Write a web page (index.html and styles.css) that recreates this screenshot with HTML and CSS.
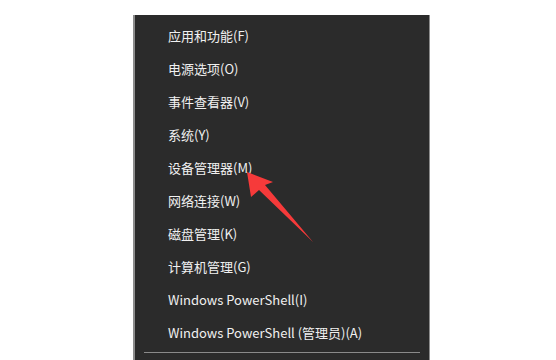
FILE: index.html
```html
<!DOCTYPE html>
<html lang="zh-CN">
<head>
<meta charset="utf-8">
<link rel="stylesheet" href="styles.css">
</head>
<body>
<div class="page">
  <div class="menu">
    <div class="item">应用和功能(F)</div>
    <div class="item">电源选项(O)</div>
    <div class="item">事件查看器(V)</div>
    <div class="item">系统(Y)</div>
    <div class="item">设备管理器(M)</div>
    <div class="item">网络连接(W)</div>
    <div class="item">磁盘管理(K)</div>
    <div class="item">计算机管理(G)</div>
    <div class="item">Windows PowerShell(I)</div>
    <div class="item">Windows PowerShell (管理员)(A)</div>
    <div class="sep"></div>
  </div>
  <svg class="arrow" width="556" height="360" viewBox="0 0 556 360">
    <polygon points="247,172 251,197 259,190 313,242 265,185 273,182" fill="#f63a3a"/>
  </svg>
</div>
</body>
</html>
```
FILE: styles.css
```css
html, body {
  margin: 0;
  padding: 0;
  background: #ffffff;
  overflow: hidden;
}
.page {
  position: relative;
  width: 556px;
  height: 360px;
  overflow: hidden;
}
.menu {
  margin-left: 133px;
  margin-top: 15px;
  width: 294px;
  height: 400px;
  background: #2b2b2b;
  border-left: 2px solid #8c8c8c;
  border-right: 1px solid #8c8c8c;
  padding-top: 4px;
  box-sizing: content-box;
  font-family: "Noto Sans CJK SC", sans-serif;
  font-size: 13px;
  color: #f0f0f0;
}
.item {
  height: 33px;
  line-height: 33px;
  padding-left: 33px;
  white-space: nowrap;
}
.sep {
  height: 1px;
  background: #8a8a8a;
  margin: 3px 9px 3px 9px;
}
.arrow {
  position: absolute;
  left: 0;
  top: 0;
}
```
